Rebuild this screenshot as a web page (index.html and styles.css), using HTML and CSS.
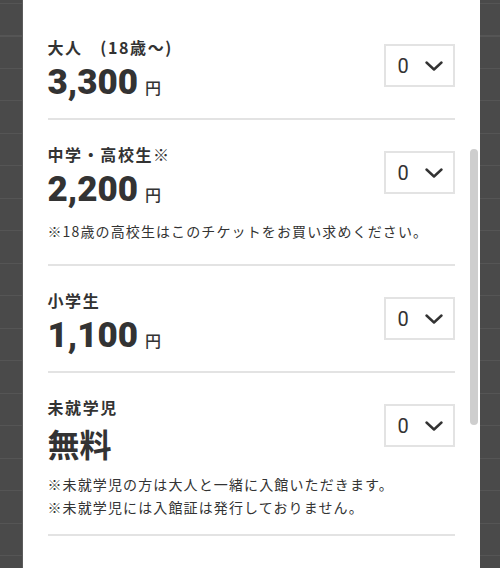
FILE: index.html
```html
<!DOCTYPE html>
<html lang="ja">
<head>
<meta charset="utf-8">
<title>チケット選択</title>
<link rel="stylesheet" href="styles.css">
</head>
<body>
<div class="page">
  <div class="panel">
    <ul class="tickets">
      <li class="ticket">
        <div class="info">
          <p class="label">大人　(18歳〜)</p>
          <p class="price"><span class="num">3,300</span><span class="yen">円</span></p>
        </div>
        <div class="qty"><span class="qty-val">0</span><svg class="chev" viewBox="0 0 18 10" width="18" height="10"><path d="M1.5 1.5 L9 8.5 L16.5 1.5" fill="none" stroke="#333" stroke-width="2.4" stroke-linecap="round" stroke-linejoin="round"/></svg></div>
      </li>
      <li class="ticket">
        <div class="info">
          <p class="label">中学・高校生※</p>
          <p class="price"><span class="num">2,200</span><span class="yen">円</span></p>
        </div>
        <div class="qty"><span class="qty-val">0</span><svg class="chev" viewBox="0 0 18 10" width="18" height="10"><path d="M1.5 1.5 L9 8.5 L16.5 1.5" fill="none" stroke="#333" stroke-width="2.4" stroke-linecap="round" stroke-linejoin="round"/></svg></div>
        <p class="note note-single">※18歳の高校生はこのチケットをお買い求めください。</p>
      </li>
      <li class="ticket">
        <div class="info">
          <p class="label">小学生</p>
          <p class="price"><span class="num">1,100</span><span class="yen">円</span></p>
        </div>
        <div class="qty"><span class="qty-val">0</span><svg class="chev" viewBox="0 0 18 10" width="18" height="10"><path d="M1.5 1.5 L9 8.5 L16.5 1.5" fill="none" stroke="#333" stroke-width="2.4" stroke-linecap="round" stroke-linejoin="round"/></svg></div>
      </li>
      <li class="ticket">
        <div class="info">
          <p class="label">未就学児</p>
          <p class="price"><span class="free">無料</span></p>
        </div>
        <div class="qty"><span class="qty-val">0</span><svg class="chev" viewBox="0 0 18 10" width="18" height="10"><path d="M1.5 1.5 L9 8.5 L16.5 1.5" fill="none" stroke="#333" stroke-width="2.4" stroke-linecap="round" stroke-linejoin="round"/></svg></div>
        <p class="note">※未就学児の方は大人と一緒に入館いただきます。<br>※未就学児には入館証は発行しておりません。</p>
      </li>
    </ul>
    <div class="scrollbar"></div>
  </div>
</div>
</body>
</html>
```
FILE: styles.css
```css
html, body {
  margin: 0;
  padding: 0;
}
body {
  background-color: #4a4a4a;
  background-image: repeating-linear-gradient(to bottom, #555 0, #555 1px, transparent 1px, transparent 32.5px);
  background-position: 0 3px;
  font-family: "Noto Sans CJK JP", "Noto Sans", sans-serif;
  color: #333;
}
.page {
  display: flex;
  justify-content: center;
  min-height: 568px;
}
.panel {
  position: relative;
  width: 458px;
  margin-left: 1px;
  box-sizing: border-box;
  background: #fff;
  padding: 13px 25px 0 25px;
  min-height: 568px;
  border-left: 1px solid #5c5c5c;
}
.tickets {
  list-style: none;
  margin: 0;
  padding: 0;
}
.ticket {
  display: grid;
  grid-template-columns: 1fr auto;
  align-items: start;
  padding: 22px 0 15px 0;
  border-bottom: 2px solid #e3e3e3;
}
.info {
  display: flex;
  flex-direction: column;
}
.label {
  margin: 0;
  font-size: 16px;
  line-height: 24px;
  font-weight: 700;
  letter-spacing: 0.1em;
}
.price {
  margin: 4px 0 0 0;
  line-height: 40px;
  height: 40px;
  display: flex;
  align-items: baseline;
}
.num {
  font-family: Roboto, "Noto Sans", sans-serif;
  font-size: 35px;
  font-weight: 900;
  letter-spacing: 0;
}
.yen {
  font-size: 16px;
  font-weight: 500;
  margin-left: 7px;
}
.free {
  font-size: 32px;
  font-weight: 700;
}
.note {
  grid-column: 1 / -1;
  margin: 10px 0 0 0;
  font-size: 14px;
  line-height: 23px;
  letter-spacing: 0.08em;
}
.note-single {
  margin-bottom: 6px;
}
.qty {
  margin-top: 9px;
  width: 71px;
  height: 43px;
  box-sizing: border-box;
  border: 2px solid #e3e3e3;
  display: flex;
  align-items: center;
  justify-content: space-between;
  padding: 0 10px 0 12px;
}
.qty-val {
  font-family: Roboto, "Noto Sans", sans-serif;
  font-size: 20px;
  color: #333;
}
.chev {
  display: block;
}
.scrollbar {
  position: absolute;
  left: 447px;
  top: 149px;
  width: 8px;
  height: 276px;
  border-radius: 4px;
  background: #cecece;
}
```
